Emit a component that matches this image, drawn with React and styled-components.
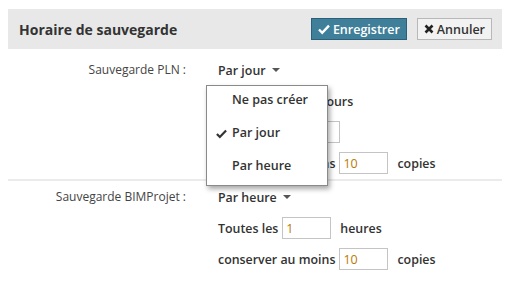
import styled, { createGlobalStyle } from 'styled-components'

const GlobalStyle = createGlobalStyle`
	body {
		margin: 0;
		padding: 9px 10px 0 8px;
		background: #ffffff;
		font-family: "Open Sans", "Liberation Sans", sans-serif;
		color: #333333;
	}
`

const Header = styled.div`
	display: flex;
	align-items: center;
	justify-content: space-between;
	height: 40px;
	padding: 0 10px 0 11px;
	background-color: #e8e8e8;
`

const Title = styled.h2`
	margin: 0;
	font-size: 14px;
	font-weight: 700;
	color: #333333;
`

const Actions = styled.div`
	display: flex;
	gap: 10px;
`

const Button = styled.button`
	display: flex;
	align-items: center;
	gap: 3px;
	height: 22px;
	padding: 0 6px 0 6px;
	font-family: inherit;
	font-size: 12.5px;
	font-weight: 600;
	border-radius: 0;
	cursor: pointer;
	background-color: ${(props) => (props.primary ? '#3f7f9a' : '#f2f2f2')};
	color: ${(props) => (props.primary ? '#ffffff' : '#333333')};
	border: 1px solid ${(props) => (props.primary ? '#2c6078' : '#b8b8b8')};
`

const Section = styled.div`
	display: grid;
	grid-template-columns: 178px 1fr;
	column-gap: 32px;
	padding: ${(props) => props.pad};
	border-bottom: ${(props) => (props.divider ? '2px solid #ebebeb' : 'none')};
`

const Label = styled.div`
	text-align: right;
	font-size: 12px;
	line-height: 22px;
	color: #444444;
`

const Rows = styled.div`
	display: flex;
	flex-direction: column;
	gap: 9px;
`

const Row = styled.div`
	position: relative;
	display: flex;
	align-items: center;
	gap: 4px;
	height: 22px;
	font-size: 12.4px;
	font-weight: 600;
	color: #333333;
`

const Select = styled.div`
	position: relative;
	display: flex;
	align-items: center;
	gap: 6px;
	cursor: pointer;
`

const Caret = styled.span`
	width: 0;
	height: 0;
	border-left: 4px solid transparent;
	border-right: 4px solid transparent;
	border-top: 4px solid #555555;
`

const Input = styled.input`
	box-sizing: border-box;
	width: 49px;
	height: 22px;
	padding: 0 3px;
	font-family: inherit;
	font-size: 12.5px;
	color: #b87a00;
	border: 1px solid #c4c4c4;
	margin-right: 5px;
`

const Menu = styled.ul`
	position: absolute;
	top: 23px;
	left: -12px;
	z-index: 10;
	width: 120px;
	margin: 0;
	padding: 0;
	list-style: none;
	background: #ffffff;
	border: 1px solid #8a8a8a;
	box-shadow: 2px 3px 5px rgba(0, 0, 0, 0.35);
`

const MenuItem = styled.li`
	position: relative;
	display: flex;
	align-items: center;
	height: 33px;
	padding: 0 0 6px 25px;
	box-sizing: border-box;
	font-size: 12.5px;
	font-weight: 600;
	color: #333333;
`

const Check = styled.span`
	position: absolute;
	left: 9px;
	top: 9px;
	display: flex;
`

function CheckIcon({ color = '#333333', size = 11 }) {
	return (
		<svg width={size} height={size} viewBox="0 0 12 12">
			<path d="M1 6.5 L4.2 9.8 L11 2.6" fill="none" stroke={color} strokeWidth="2.4" />
		</svg>
	)
}

function CrossIcon() {
	return (
		<svg width="10" height="10" viewBox="0 0 10 10">
			<path d="M1.5 1.5 L8.5 8.5 M8.5 1.5 L1.5 8.5" stroke="#222222" strokeWidth="2.6" />
		</svg>
	)
}

export default function App() {
	return (
		<>
			<GlobalStyle />
			<Header>
				<Title>Horaire de sauvegarde</Title>
				<Actions>
					<Button primary>
						<CheckIcon color="#ffffff" size={12} />
						Enregistrer
					</Button>
					<Button>
						<CrossIcon />
						Annuler
					</Button>
				</Actions>
			</Header>

			<Section pad="10px 0 5px" divider>
				<Label>Sauvegarde PLN :</Label>
				<Rows>
					<Row>
						<Select>
							Par jour <Caret />
							<Menu>
								<MenuItem>Ne pas créer</MenuItem>
								<MenuItem>
									<Check>
										<CheckIcon />
									</Check>
									Par jour
								</MenuItem>
								<MenuItem>Par heure</MenuItem>
							</Menu>
						</Select>
					</Row>
					<Row>Exécuter tous les jours</Row>
					<Row>
						à partir de : <Input defaultValue="" />
					</Row>
					<Row>
						conserver au moins <Input defaultValue="10" /> copies
					</Row>
				</Rows>
			</Section>

			<Section pad="5px 0 0">
				<Label>Sauvegarde BIMProjet :</Label>
				<Rows>
					<Row>
						<Select>
							Par heure <Caret />
						</Select>
					</Row>
					<Row>
						Toutes les <Input defaultValue="1" /> heures
					</Row>
					<Row>
						conserver au moins <Input defaultValue="10" /> copies
					</Row>
				</Rows>
			</Section>
		</>
	)
}
